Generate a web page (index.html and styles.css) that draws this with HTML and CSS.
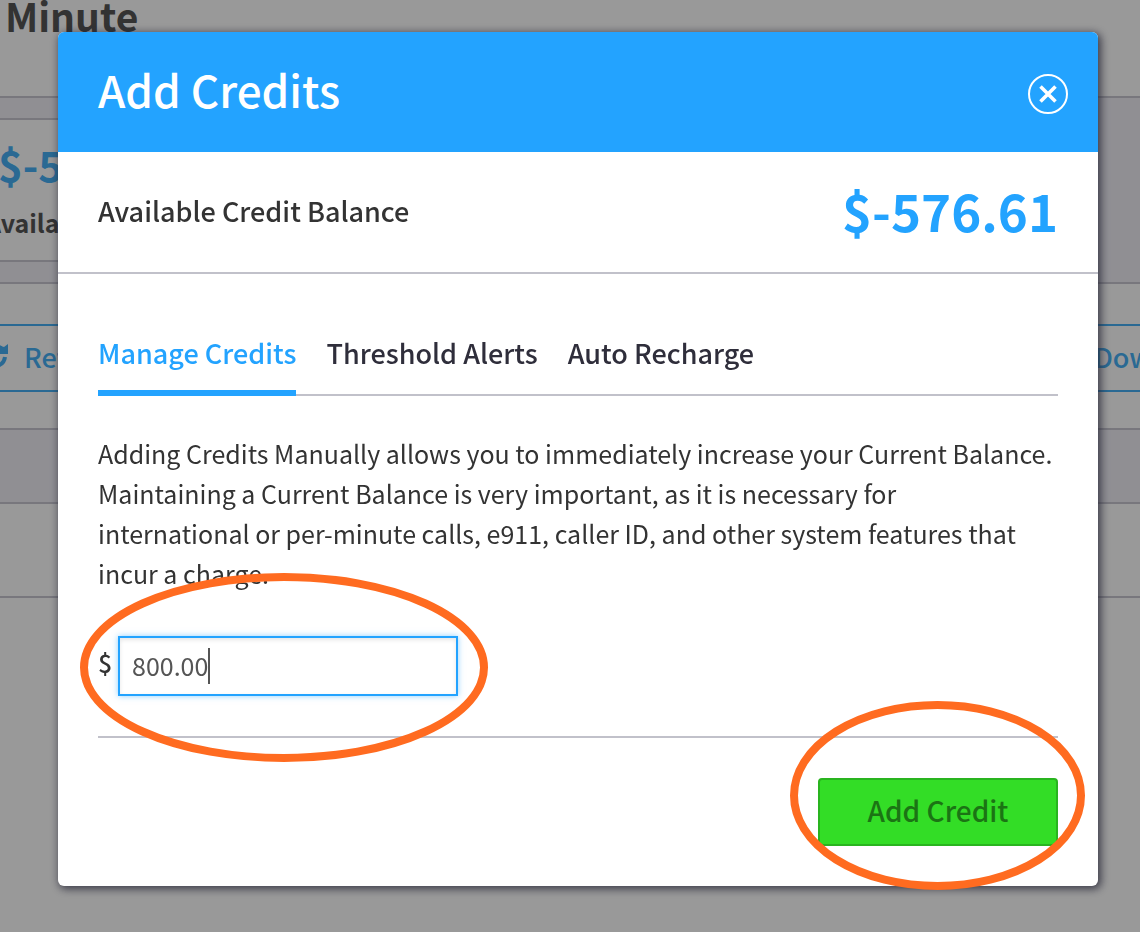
FILE: index.html
```html
<!DOCTYPE html>
<html lang="en">
<head>
<meta charset="utf-8">
<title>Add Credits</title>
<link rel="stylesheet" href="styles.css">
</head>
<body>
<main class="page">
  <header class="page-head"><h1 class="page-title">Minute</h1></header>
  <section class="summary">
    <div class="summary-card">
      <strong class="summary-amount">$-576.61</strong>
      <span class="summary-label">Available Credit Balance</span>
    </div>
  </section>
  <section class="toolbar">
    <button class="tool tool-refresh" type="button">
      <svg class="tool-icon" viewBox="0 0 26 26" aria-hidden="true">
        <path d="M23 14A10.500 10.500 0 0 1 6 21" />
        <path d="M3 11A10.500 10.500 0 0 1 19 5" />
        <path class="solid" d="M26 1V11H16V5L19 3L22 4Z" />
        <path class="solid" d="M1 24V15H11Z" />
      </svg>
      Refresh
    </button>
    <button class="tool tool-download" type="button">Download</button>
  </section>
  <div class="table-head"></div>
  <div class="table-row"></div>
</main>

<div class="overlay">
  <section class="modal" role="dialog" aria-labelledby="modal-title">
    <header class="modal-head">
      <h2 class="modal-title" id="modal-title">Add Credits</h2>
      <button class="close" type="button" aria-label="Close">
        <svg class="close-icon" viewBox="0 0 40 40" aria-hidden="true">
          <circle cx="20" cy="20" r="19" stroke-width="2" />
          <path d="M12.500 12.500L27.500 27.500M27.500 12.500L12.500 27.500" stroke-width="3.600" />
        </svg>
      </button>
    </header>
    <div class="balance">
      <span class="balance-label">Available Credit Balance</span>
      <strong class="balance-amount">$-576.61</strong>
    </div>
    <div class="modal-body">
      <nav class="tabs">
        <a class="tab tab-active" href="#manage">Manage Credits</a>
        <a class="tab" href="#alerts">Threshold Alerts</a>
        <a class="tab" href="#recharge">Auto Recharge</a>
      </nav>
      <p class="intro">Adding Credits Manually allows you to immediately increase your Current Balance.<br>Maintaining a Current Balance is very important, as it is necessary for<br>international or per-minute calls, e911, caller ID, and other system features that<br>incur a charge.</p>
      <div class="amount">
        <label class="amount-label" for="amount">$</label>
        <div class="amount-field">
          <input class="amount-input" id="amount" type="text" value="800.00">
          <span class="caret"></span>
          <svg class="ring ring-amount" viewBox="0 0 408 189" aria-hidden="true"><ellipse cx="204" cy="94.500" rx="200" ry="90.500" /></svg>
        </div>
      </div>
      <footer class="actions">
        <div class="submit-wrap">
          <button class="submit" type="submit">Add Credit</button>
          <svg class="ring ring-submit" viewBox="0 0 295 189" aria-hidden="true"><ellipse cx="147.500" cy="94.500" rx="143.500" ry="90.500" /></svg>
        </div>
      </footer>
    </div>
  </section>
</div>
</body>
</html>
```
FILE: styles.css
```css
* { box-sizing: border-box; }
body {
  margin: 0;
  background: #fff;
  color: #333;
  font-family: "Noto Sans CJK SC", "Open Sans", sans-serif;
  font-weight: 500;
  overflow: hidden;
}
h1, h2, p { margin: 0; }
button, input { font-family: inherit; font-weight: inherit; }

.page { overflow: hidden; }
.page-head {
  height: 98px;
  border-bottom: 2px solid #c8c7d1;
}
.page-title {
  padding-left: 5px;
  font-size: 39px;
  font-weight: 600;
  line-height: 30px;
  color: #555;
}
.summary {
  height: 186px;
  padding-top: 20px;
  background: #f0eff6;
  border-bottom: 2px solid #c8c7d1;
}
.summary-card {
  display: flex;
  flex-direction: column;
  width: 480px;
  height: 144px;
  padding-top: 16px;
  background: #fff;
  border: solid #c8c7d1;
  border-width: 2px 0;
}
.summary-amount {
  margin-left: -2px;
  font-size: 42px;
  line-height: 56px;
  color: #46b0f5;
}
.summary-label {
  margin-left: -15px;
  font-size: 25px;
  font-weight: 600;
  line-height: 60px;
  color: #555;
}
.toolbar {
  display: flex;
  justify-content: space-between;
  padding: 40px 0 36px;
  border-bottom: 2px solid #c8c7d1;
}
.tool {
  display: flex;
  align-items: center;
  gap: 16px;
  width: 240px;
  height: 68px;
  padding: 0 0 4px;
  background: #fff;
  border: solid #46b0f5;
  border-width: 2px 0;
  color: #46b0f5;
  font-size: 27px;
}
.tool-refresh { margin-left: -18px; }
.tool-download {
  width: 120px;
  margin-right: -74px;
}
.tool-icon {
  width: 26px;
  height: 26px;
  fill: none;
  stroke: #46b0f5;
  stroke-width: 4;
}
.tool-icon .solid { fill: #46b0f5; stroke: none; }
.table-head {
  height: 74px;
  background: #f0eff6;
  border-bottom: 2px solid #c8c7d1;
}
.table-row {
  height: 94px;
  border-bottom: 2px solid #c8c7d1;
}

.overlay {
  position: fixed;
  inset: 0;
  padding: 32px 42px 46px 58px;
  background: rgba(0, 0, 0, 0.4);
}
.modal {
  background: #fff;
  border-radius: 6px;
  box-shadow: 2px 2px 8px 1px rgba(36, 36, 52, 0.8);
}
.modal-head {
  display: flex;
  align-items: center;
  justify-content: space-between;
  height: 120px;
  padding: 0 30px 0 40px;
  background: #23a3ff;
  border-radius: 6px 6px 0 0;
  color: #fff;
}
.modal-title {
  padding-bottom: 6px;
  font-size: 44px;
  font-weight: 500;
  line-height: 60px;
}
.close {
  width: 40px;
  height: 40px;
  margin-top: 4px;
  padding: 0;
  background: none;
  border: 0;
}
.close-icon {
  display: block;
  width: 40px;
  height: 40px;
  fill: none;
  stroke: #fff;
}
.balance {
  display: flex;
  align-items: center;
  justify-content: space-between;
  height: 122px;
  padding: 0 40px 4px;
  border-bottom: 2px solid #c1c1ca;
}
.balance-label { font-size: 27px; }
.balance-amount {
  font-size: 51px;
  line-height: 60px;
  color: #23a3ff;
}
.modal-body { padding: 59px 40px 40px; }
.tabs {
  display: flex;
  gap: 30px;
  box-shadow: inset 0 -2px #c1c1ca;
}
.tab {
  padding-bottom: 17px;
  border-bottom: 6px solid transparent;
  color: #2f2e3b;
  font-size: 27px;
  line-height: 40px;
  text-decoration: none;
}
.tab-active {
  border-color: #23a3ff;
  color: #23a3ff;
}
.intro {
  padding: 37px 0 43px;
  font-size: 25px;
  font-weight: 400;
  line-height: 40px;
  white-space: nowrap;
}
.amount {
  display: flex;
  align-items: center;
  gap: 6px;
  padding-bottom: 40px;
  border-bottom: 2px solid #c1c1ca;
}
.amount-label {
  width: 14px;
  padding-bottom: 8px;
  font-size: 25px;
}
.amount-field {
  position: relative;
  width: 340px;
}
.amount-input {
  display: block;
  width: 100%;
  height: 60px;
  padding: 0 12px 2px;
  background: #fff;
  border: 2px solid #23a3ff;
  border-radius: 0;
  outline: 0;
  box-shadow: 0 0 6px rgba(35, 163, 255, 0.5), inset 0 2px 4px rgba(0, 0, 0, 0.1);
  color: #555;
  font-size: 25px;
  font-weight: 400;
}
.caret {
  position: absolute;
  top: 12px;
  left: 90px;
  width: 2px;
  height: 36px;
  background: #555;
}
.actions {
  display: flex;
  justify-content: flex-end;
  padding-top: 40px;
}
.submit-wrap { position: relative; }
.submit {
  display: block;
  width: 240px;
  height: 68px;
  padding: 0 0 4px;
  background: #33dd26;
  border: 2px solid #29b41f;
  border-radius: 4px;
  color: #1b7414;
  font-size: 28px;
}
.ring {
  position: absolute;
  fill: none;
  stroke: #ff6b20;
  stroke-width: 8;
  pointer-events: none;
}
.ring-amount {
  top: -63px;
  left: -38px;
  width: 408px;
  height: 189px;
}
.ring-submit {
  top: -77px;
  left: -28px;
  width: 295px;
  height: 189px;
}
```
